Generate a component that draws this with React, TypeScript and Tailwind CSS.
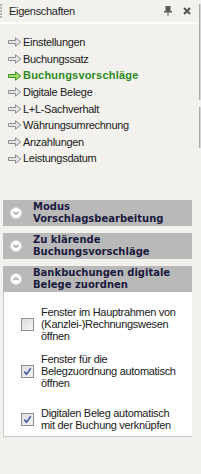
const items = [
  "Einstellungen",
  "Buchungssatz",
  "Buchungsvorschläge",
  "Digitale Belege",
  "L+L-Sachverhalt",
  "Währungsumrechnung",
  "Anzahlungen",
  "Leistungsdatum",
];

function Arrow({ active }: { active?: boolean }) {
  const fill = active ? "#a6d86a" : "#e4e4e4";
  const stroke = active ? "#3b8f1c" : "#8c8c8c";
  return (
    <svg width="14" height="10" viewBox="0 0 14 10" className="shrink-0">
      <path
        d="M0.5 3.5 H7.5 V0.8 L12.8 5 L7.5 9.2 V6.5 H0.5 Z"
        fill={fill}
        stroke={stroke}
        strokeWidth="1"
        strokeLinejoin="round"
      />
    </svg>
  );
}

function Chevron({ up }: { up?: boolean }) {
  return (
    <div className="w-[12px] h-[12px] rounded-full bg-white border border-[#d8d8d8] flex items-center justify-center shrink-0">
      <svg width="6" height="4" viewBox="0 0 6 4">
        <path
          d={up ? "M0.5 3.3 L3 0.8 L5.5 3.3" : "M0.5 0.7 L3 3.2 L5.5 0.7"}
          fill="none"
          stroke="#9a9a9a"
          strokeWidth="1.3"
        />
      </svg>
    </div>
  );
}

function SectionBar({ lines, up }: { lines: string[]; up?: boolean }) {
  return (
    <div className="h-[26px] bg-[#b9b9b9] flex items-center">
      <div className="ml-[7px] mr-[11px]">
        <Chevron up={up} />
      </div>
      <div
        className="pt-[1px] self-start text-[10px] font-bold leading-[12px] text-[#1b1b3d]"
        style={{ fontFamily: '"DejaVu Sans", Verdana, sans-serif' }}
      >
        {lines.map((l) => (
          <div key={l} className="whitespace-nowrap">
            {l}
          </div>
        ))}
      </div>
    </div>
  );
}

function Check({ checked }: { checked?: boolean }) {
  return (
    <div className="w-[13px] h-[13px] border border-[#8e8f8f] bg-gradient-to-br from-[#dcdcdc] to-[#f6f6f6] flex items-center justify-center shrink-0">
      {checked && (
        <svg width="9" height="9" viewBox="0 0 9 9">
          <path d="M1.2 4.6 L3.5 7.2 L7.8 1.2" fill="none" stroke="#4a5c9e" strokeWidth="1.7" />
        </svg>
      )}
    </div>
  );
}

function Option({ lines, checked, className }: { lines: string[]; checked?: boolean; className?: string }) {
  return (
    <div className={"flex items-center gap-[7px] " + (className ?? "")}>
      <Check checked={checked} />
      <div className="leading-[12px] text-[11px] tracking-[-0.3px] text-[#1a1a1a]">
        {lines.map((l) => (
          <div key={l} className="whitespace-nowrap">
            {l}
          </div>
        ))}
      </div>
    </div>
  );
}

export default function App() {
  return (
    <div
      className="relative w-[201px] h-[474px] bg-[#f2f1ed] overflow-hidden"
      style={{ fontFamily: '"Liberation Sans", Arial, sans-serif' }}
    >
      {/* Scroll rails on the right edge */}
      <div className="absolute left-[199px] top-[4px] h-[96px] w-[2px] border-l border-[#a9a9a9] bg-[#d6d6d6]" />
      <div className="absolute left-[199px] top-[107px] h-[41px] w-[2px] border-l border-[#a9a9a9] bg-[#d6d6d6]" />

      {/* Header */}
      <div className="h-[22px] flex items-center">
        <svg width="3" height="15" viewBox="0 0 3 15" className="ml-0 shrink-0">
          {[0, 3, 6, 9, 12].map((y) => (
            <rect key={y} x="0" y={y} width="2" height="2" fill="#b4b4b4" />
          ))}
        </svg>
        <span className="ml-[6px] text-[11px] tracking-[-0.3px] text-[#1e1e1e]">Eigenschaften</span>
        <div className="ml-auto mr-[10px] flex items-center gap-[11px]">
          <svg width="8" height="10" viewBox="0 0 8 10">
            <rect x="1.5" y="0" width="5" height="6" fill="#5a5a5a" />
            <rect x="0" y="5" width="8" height="1.5" fill="#5a5a5a" />
            <rect x="3.5" y="6" width="1" height="4" fill="#5a5a5a" />
          </svg>
          <svg width="8" height="8" viewBox="0 0 8 8">
            <path d="M1 1 L7 7 M7 1 L1 7" stroke="#555" strokeWidth="2" />
          </svg>
        </div>
      </div>
      <div className="h-[2px] w-[197px] bg-white" />

      {/* Navigation list */}
      <div className="h-[176px] pt-[10px] pl-[8px]">
        {items.map((it, i) => {
          const active = i === 2;
          return (
            <div key={it} className="h-[16.64px] flex items-center gap-[1px]">
              <Arrow active={active} />
              <span
                className={
                  "text-[11px] whitespace-nowrap " +
                  (active ? "font-bold text-[#2c8a1c] tracking-[0.2px]" : "text-[#1a1a1a] tracking-[-0.3px]")
                }
              >
                {it}
              </span>
            </div>
          );
        })}
      </div>

      {/* Sections */}
      <div className="ml-[3px] w-[189px]">
        <SectionBar lines={["Modus", "Vorschlagsbearbeitung"]} />
        <div className="mt-[7px]">
          <SectionBar lines={["Zu klärende", "Buchungsvorschläge"]} />
        </div>
        <div className="mt-[7px]">
          <SectionBar lines={["Bankbuchungen digitale", "Belege zuordnen"]} up />
        </div>
        <div className="h-[145px] bg-white border-l border-b border-[#c8c8c8] pt-[14px] pl-[17px]">
          <Option lines={["Fenster im Hauptrahmen von", "(Kanzlei-)Rechnungswesen", "öffnen"]} />
          <Option className="mt-[11px]" lines={["Fenster für die", "Belegzuordnung automatisch", "öffnen"]} checked />
          <Option className="mt-[18px]" lines={["Digitalen Beleg automatisch", "mit der Buchung verknüpfen"]} checked />
        </div>
      </div>
    </div>
  );
}
